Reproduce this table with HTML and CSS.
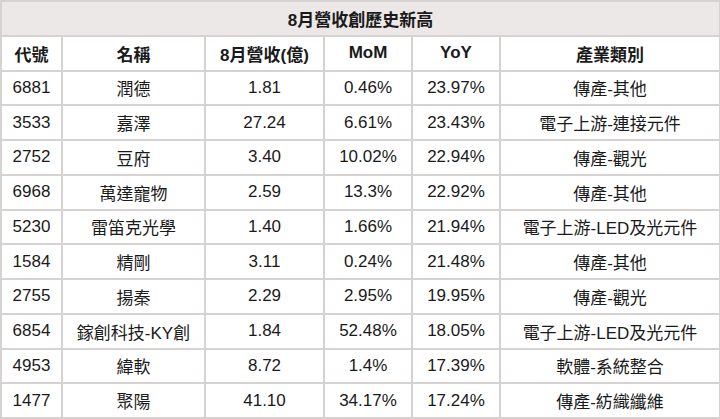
FILE: index.html
```html
<!DOCTYPE html>
<html lang="zh-Hant">
<head>
<meta charset="utf-8">
<link rel="stylesheet" href="styles.css">
</head>
<body>
<table class="grid">
  <colgroup>
    <col class="c1"><col class="c2"><col class="c3"><col class="c4"><col class="c5"><col class="c6">
  </colgroup>
  <thead>
    <tr class="title"><th colspan="6">8月營收創歷史新高</th></tr>
    <tr class="head"><th>代號</th><th>名稱</th><th>8月營收(億)</th><th>MoM</th><th>YoY</th><th>產業類別</th></tr>
  </thead>
  <tbody>
    <tr><td>6881</td><td>潤德</td><td>1.81</td><td>0.46%</td><td>23.97%</td><td>傳產-其他</td></tr>
    <tr><td>3533</td><td>嘉澤</td><td>27.24</td><td>6.61%</td><td>23.43%</td><td>電子上游-連接元件</td></tr>
    <tr><td>2752</td><td>豆府</td><td>3.40</td><td>10.02%</td><td>22.94%</td><td>傳產-觀光</td></tr>
    <tr><td>6968</td><td>萬達寵物</td><td>2.59</td><td>13.3%</td><td>22.92%</td><td>傳產-其他</td></tr>
    <tr><td>5230</td><td>雷笛克光學</td><td>1.40</td><td>1.66%</td><td>21.94%</td><td>電子上游-LED及光元件</td></tr>
    <tr><td>1584</td><td>精剛</td><td>3.11</td><td>0.24%</td><td>21.48%</td><td>傳產-其他</td></tr>
    <tr><td>2755</td><td>揚秦</td><td>2.29</td><td>2.95%</td><td>19.95%</td><td>傳產-觀光</td></tr>
    <tr><td>6854</td><td>鎵創科技-KY創</td><td>1.84</td><td>52.48%</td><td>18.05%</td><td>電子上游-LED及光元件</td></tr>
    <tr><td>4953</td><td>緯軟</td><td>8.72</td><td>1.4%</td><td>17.39%</td><td>軟體-系統整合</td></tr>
    <tr><td>1477</td><td>聚陽</td><td>41.10</td><td>34.17%</td><td>17.24%</td><td>傳產-紡織纖維</td></tr>
  </tbody>
</table>
</body>
</html>
```
FILE: styles.css
```css
html, body {
  margin: 0;
  padding: 0;
  background: #ffffff;
}
.grid {
  border-collapse: collapse;
  table-layout: fixed;
  width: 719px;
  font-family: "Liberation Sans", "Noto Sans CJK TC", sans-serif;
  font-size: 17px;
  color: #1a1a1a;
}
.c1 { width: 61px; }
.c2 { width: 143px; }
.c3 { width: 119px; }
.c4 { width: 88px; }
.c5 { width: 88px; }
.c6 { width: 220px; }
.grid th, .grid td {
  border: 2px solid #d6d2d1;
  text-align: center;
  padding: 0;
  height: 32.75px;
  white-space: nowrap;
}
.grid th { font-weight: bold; }
.title th {
  background: #ece8e7;
}
```
